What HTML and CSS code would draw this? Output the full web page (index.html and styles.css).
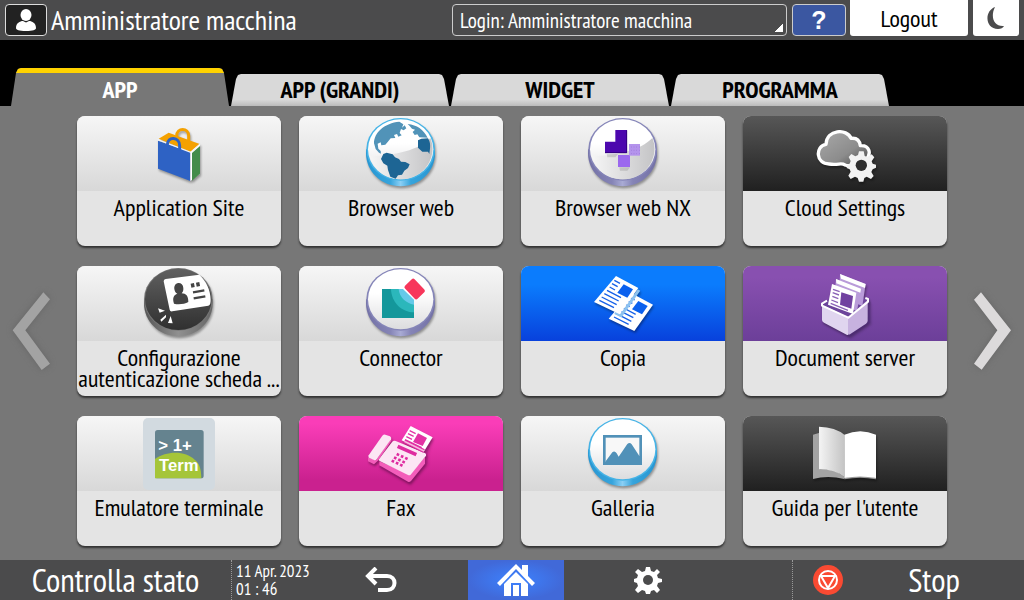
FILE: index.html
```html
<!DOCTYPE html>
<html lang="it">
<head>
  <meta charset="UTF-8">
  <meta name="viewport" content="width=device-width, initial-scale=1.0">
  <title>Amministratore macchina</title>
  <link rel="stylesheet" href="styles.css">
</head>
<body>
  <!-- Shared gradients -->
  <svg class="defs" width="0" height="0" aria-hidden="true">
    <defs>
      <linearGradient id="rim-blue"><stop offset="0" stop-color="#2796d2"/><stop offset=".35" stop-color="#36a4dc"/><stop offset=".5" stop-color="#8ccff4"/><stop offset=".65" stop-color="#36a4dc"/><stop offset="1" stop-color="#2796d2"/></linearGradient>
      <linearGradient id="rim-violet"><stop offset="0" stop-color="#7371a6"/><stop offset=".35" stop-color="#8584b6"/><stop offset=".5" stop-color="#a9abd4"/><stop offset=".65" stop-color="#8584b6"/><stop offset="1" stop-color="#7371a6"/></linearGradient>
      <linearGradient id="rim-dark"><stop offset="0" stop-color="#555"/><stop offset=".5" stop-color="#909090"/><stop offset="1" stop-color="#666"/></linearGradient>
      <linearGradient id="face" x2="0" y2="1"><stop offset=".4" stop-color="#fff"/><stop offset="1" stop-color="#dcdcde"/></linearGradient>
      <linearGradient id="face-dark" x2="0" y2="1"><stop offset="0" stop-color="#606060"/><stop offset="1" stop-color="#303030"/></linearGradient>
      <linearGradient id="shade" x1="1" x2="0"><stop offset="0" stop-color="#c4c4c6"/><stop offset="1" stop-color="#f6f6f6"/></linearGradient>
      <linearGradient id="cloud" x2="1" y2="1"><stop offset="0" stop-color="#aaa"/><stop offset=".6" stop-color="#8c8c8c"/><stop offset="1" stop-color="#444"/></linearGradient>
      <linearGradient id="page" x2="1" y2="0"><stop offset="0" stop-color="#f4f4f4"/><stop offset="1" stop-color="#c4c4c4"/></linearGradient>
    </defs>
  </svg>

  <header class="topbar">
    <button class="user-btn" aria-label="Utente">
      <svg width="20" height="22" viewBox="0 0 20 22" fill="#fff"><ellipse cx="10" cy="6" rx="5.500" ry="6"/><path d="M0 19c0-5 4-7 7-7l3 1.500 3-1.500c3 0 7 2 7 7 0 2-3 3-10 3S0 21 0 19z"/></svg>
    </button>
    <h1>Amministratore macchina</h1>
    <select class="login" aria-label="Login">
      <option>Login: Amministratore macchina</option>
    </select>
    <button class="help-btn">?</button>
    <button class="logout-btn">Logout</button>
    <button class="sleep-btn" aria-label="Risparmio energia">
      <svg width="18" height="22" viewBox="0 0 18 22"><path d="M8 0C-3 4-2 22 11 22c3 0 5-1 6-3C7 20 3 10 8 0z" fill="#4b4b4c"/></svg>
    </button>
  </header>

  <nav class="tabs">
    <button class="tab active">APP</button>
    <button class="tab">APP (GRANDI)</button>
    <button class="tab">WIDGET</button>
    <button class="tab">PROGRAMMA</button>
  </nav>

  <main class="home">
    <button class="arrow prev" aria-label="Precedente">
      <svg width="44" height="84" viewBox="30 88 132 252"><path d="M130 98l20 21-74 93 74 100-25 19L38 212z" fill="#a3a3a3"/></svg>
    </button>

    <div class="apps">
      <button class="card">
        <span class="card-icon">
          <svg viewBox="219 24 216 216">
            <path d="M266 86l30-18 93 34-26 24z" fill="#f4a100"/>
            <path d="M320 84v-6c0-26 36-26 36 0v20" fill="none" stroke="#f4a100" stroke-width="9"/>
            <path d="M264 92l97 34v87l-97-37z" fill="#2e62c4"/>
            <path d="M361 127l29-24v88l-29 22z" fill="#fff"/>
            <path d="M366 129l24-21v83l-24 21z" fill="#438c4a"/>
            <path d="M263 89l99 38 28-24" fill="none" stroke="#f4f4f4" stroke-width="4"/>
            <path d="M292 110v-6c0-27 37-23 37 3v15" fill="none" stroke="#2e62c4" stroke-width="9"/>
          </svg>
        </span>
        <span class="card-label">Application Site</span>
      </button>

      <button class="card">
        <span class="card-icon">
          <svg viewBox="225 24 216 216">
            <path d="M228 118h207v12c0 55-45 99-103 99s-104-44-104-99z" fill="url(#rim-blue)"/>
            <ellipse cx="332" cy="118" rx="103" ry="94" fill="#46b3e6"/>
            <ellipse cx="332" cy="118" rx="98" ry="90" fill="url(#face)"/>
            <path d="M239 139c82-4 145-18 182-55 24 55-20 124-89 124-46 0-80-27-93-69z" fill="url(#shade)"/>
            <path d="M252 100c0-33 32-61 76-65l12 8-4 10 8-7 5 9-8 6-8-4-4 12 6 7-10 4-4-8-9 3 4 9-14 1-9 11-7 8-12 2-2-9-9 4 2 15 7 7 1 8-6-3-10-11zM353 42c28 3 47 16 60 41l-25-1-6-9-8 2-6-9 7-7-9-3-7-8z" fill="#5193b8"/>
            <path d="M384 91l10-5 20-1c9 13 7 29 4 47l-4-7h-17l-13-12zM280 132l10-4 18 5 7 9 12 5 6 8 13 1 13 7-5 11-11 8-7 12-12 2-7 10-16-6-7-20-2-13-12-7-7-13z" fill="#1d6594"/>
          </svg>
        </span>
        <span class="card-label">Browser web</span>
      </button>

      <button class="card">
        <span class="card-icon">
          <svg viewBox="231 24 216 216">
            <path d="M234 118h207v12c0 55-45 99-103 99s-104-44-104-99z" fill="url(#rim-violet)"/>
            <ellipse cx="338" cy="118" rx="103" ry="94" fill="#8585b8"/>
            <ellipse cx="338" cy="118" rx="98" ry="90" fill="url(#face)"/>
            <path d="M245 139c82-4 145-18 182-55 24 55-20 124-89 124-46 0-80-27-93-69z" fill="url(#shade)"/>
            <path d="M290 132h34l-8 10h-24zM328 172h32l-8 10h-22z" fill="#555" opacity=".2"/>
            <path d="M316 60h35v69h-66V95h31z" fill="#4c07ae"/>
            <path d="M285 128h65V61" fill="none" stroke="#31007d" stroke-width="3"/>
            <path d="M324 135h36v36h-36z" fill="#9b68ee"/>
            <path d="M357 102h33v35h-33z" fill="#b493ec"/>
            <path d="M363 111h26M363 121h26M363 131h26" stroke="#9068cc" stroke-width="2" stroke-dasharray="2 6"/>
          </svg>
        </span>
        <span class="card-label">Browser web NX</span>
      </button>

      <button class="card dark">
        <span class="card-icon">
          <svg viewBox="222 24 216 216">
            <path d="M282 162c-40 0-42-54-9-59 2-46 63-48 75-18 17-2 26 7 28 22 28-2 34 24 17 41l-36 18c-10-2-14 4-27-1-10-8-20 1-48-3z" fill="url(#cloud)" stroke="#fff" stroke-width="10" stroke-linejoin="round"/>
            <path d="M372 124h14l3 14 8 3 13-8 8 9-8 12 3 7 10 3v9l-10 5-4 8 7 12-8 9-13-7-7 4-3 11h-13l-4-11-8-4-13 7-7-10 7-12-3-7-9-4v-9l9-4 3-8-6-12 8-9 12 7 8-4z" fill="#f2f2f2"/>
            <circle cx="379" cy="166" r="17" fill="#2d2d2d"/>
          </svg>
        </span>
        <span class="card-label">Cloud Settings</span>
      </button>

      <button class="card">
        <span class="card-icon">
          <svg viewBox="429 24 216 216">
            <path d="M432 118h206v12c0 55-45 99-103 99s-103-44-103-99z" fill="url(#rim-dark)"/>
            <ellipse cx="535" cy="118" rx="103" ry="94" fill="#777"/>
            <ellipse cx="535" cy="118" rx="100" ry="92" fill="url(#face-dark)"/>
            <path d="M491 64q0-6 6-7l101-13c20 18 34 47 34 75 0 9-1 16-7 18l-108 17q-7 1-8-5z" fill="#fff"/>
            <path d="M523 87c-3-22 26-25 27-3 1 9-3 13-5 16 13 0 20 8 20 26-11 6-29 9-43 5-6-19 0-26 10-30-5-2-8-7-9-14z" fill="#444"/>
            <path d="M579 97l34-6M581 115l35-6" stroke="#444" stroke-width="7"/>
            <path d="M573 77l10-2M589 74l10-2" stroke="#444" stroke-width="12"/>
            <path d="M474 145l21 7-16 6zM498 164l-17 15 3 6 14-13zM512 168l6 22-14-1z" fill="#fff"/>
          </svg>
        </span>
        <span class="card-label">Configurazione <span class="nowrap">autenticazione scheda ...</span></span>
      </button>

      <button class="card">
        <span class="card-icon">
          <svg viewBox="225 24 216 216">
            <path d="M228 118h207v12c0 55-45 99-103 99s-104-44-104-99z" fill="url(#rim-violet)"/>
            <ellipse cx="332" cy="118" rx="103" ry="94" fill="#8585b8"/>
            <ellipse cx="332" cy="118" rx="98" ry="90" fill="url(#face)"/>
            <path d="M276 87h51l45 39v48h-96z" fill="#14979b"/>
            <path d="M303 87h28l41 35v35c-37 0-68-30-69-70z" fill="#2bb7bb"/>
            <path d="M326 87h13l33 32v15c-24-4-44-22-46-47z" fill="#65c9e8"/>
            <rect x="-27" y="-20" width="54" height="40" rx="6" transform="translate(374 87) rotate(46)" fill="#f7375b"/>
          </svg>
        </span>
        <span class="card-label">Connector</span>
      </button>

      <button class="card blue">
        <span class="card-icon">
          <svg viewBox="891 24 216 216">
            <g transform="translate(44 50)">
              <path d="M978 48l67 36-56 79-77-37z" fill="#fff"/>
              <path d="M1001 73l28 15-17 25-30-15z" fill="#0b61ee"/>
              <path d="M973 61l17 9M966 71l17 9M959 81l16 9M951 91l42 22M943 101l43 22M935 111l45 23M928 121l44 22" stroke="#1560e8" stroke-width="4"/>
            </g>
            <path d="M1047 90l-54 77-18-9" fill="none" stroke="#8cc2ef" stroke-width="9"/>
            <path d="M978 48l67 36-56 79-77-37z" fill="#fff"/>
            <path d="M1001 73l28 15-17 25-30-15z" fill="#0b61ee"/>
            <path d="M973 61l17 9M966 71l17 9M959 81l16 9M951 91l42 22M943 101l43 22M935 111l45 23M928 121l44 22" stroke="#1560e8" stroke-width="4"/>
          </svg>
        </span>
        <span class="card-label">Copia</span>
      </button>

      <button class="card purple">
        <span class="card-icon">
          <svg viewBox="222 24 216 216">
            <path d="M272 184l72 46 62-42v-62l-14-14-50 60z" fill="#4d2b79" opacity=".5"/>
            <path d="M260 134l24-17 90-10 24 13-56 52z" fill="#6c459b"/>
            <path d="M315 42l77 30-10 66-70-30z" fill="#b99bd9"/>
            <path d="M315 42l77 30-2 12-72-28z" fill="#fff"/>
            <path d="M303 57l75 29-12 68-70-30z" fill="#b99bd9"/>
            <path d="M303 57l75 29-2 12-72-28z" fill="#fff"/>
            <path d="M291 72l73 26-10 64-75-28z" fill="#fff"/>
            <path d="M319 97l35 11-5 38-34-12z" fill="#7142a0"/>
            <path d="M294 88l20 7M293 98l19 7M292 109l18 7M289 120l20 8M287 130l52 21" stroke="#8b63b7" stroke-width="4"/>
            <path d="M261 134l79 38v50q0 4-5 2l-68-36q-6-3-6-8z" fill="#e0d5ef"/>
            <path d="M339 172l59-52v62q0 5-5 9l-48 32q-6 3-6-3z" fill="#c7b2df"/>
            <path d="M276 122l-15 9v6l79 36 59-48v-8l-8-3" fill="none" stroke="#fff" stroke-width="6" stroke-linejoin="round"/>
          </svg>
        </span>
        <span class="card-label">Document server</span>
      </button>

      <button class="card">
        <span class="card-icon flat">
          <svg viewBox="219 24 216 216">
            <rect x="219" y="24" width="216" height="216" rx="15" fill="#d2dae0"/>
            <rect x="255" y="60" width="146" height="145" rx="8" fill="#65838f"/>
            <path d="M255 147c35-26 92-25 119 2 13 10 20 26 20 56H255z" fill="#a5c539"/>
            <g class="term-text"><text x="265" y="123">&gt; 1+</text><text x="267" y="184">Term</text></g>
          </svg>
        </span>
        <span class="card-label">Emulatore terminale</span>
      </button>

      <button class="card pink">
        <span class="card-icon">
          <svg viewBox="885 24 216 216">
            <path d="M925 171l94 51 54-62v-35l14-37-60 10z" fill="#8c1572" opacity=".3"/>
            <path d="M1022 48l66 34-27 44-66-35z" fill="#fff"/>
            <path d="M1044 70l27 14-13 24-29-12z" fill="#e332a4"/>
            <path d="M1019 62l18 9M1014 71l17 8M1009 80l17 8M1005 89l50 24" stroke="#e332a4" stroke-width="4"/>
            <path d="M928 154v12l86 49q4 2 9-2l42-52v-20l-45 52z" fill="#f35dba"/>
            <path d="M967 95q4-4 10-2l22 9 67 28q3 2 2 7l-46 57q-3 3-8 1l-85-42q-4-2-2-6z" fill="#fce6f4"/>
            <path d="M983 109l56 25M1003 94l59 29" stroke="#df2ba0" stroke-width="11"/>
            <path d="M1003 94l59 29" stroke="#f7b8de" stroke-width="5"/>
            <path d="M980 132l35 16M972 142l35 17M965 152l38 18" stroke="#df2ba0" stroke-width="8" stroke-dasharray="8 6"/>
            <path d="M894 142v12l18 9 13-12 39-58V83l-46 68z" fill="#f35dba"/>
            <path d="M937 77q4-4 9-3l14 5q5 3 3 9l-43 60q-3 4-8 2l-15-7q-3-3-1-7z" fill="#fce6f4"/>
          </svg>
        </span>
        <span class="card-label">Fax</span>
      </button>

      <button class="card">
        <span class="card-icon">
          <svg viewBox="231 24 216 216">
            <path d="M234 118h207v12c0 55-45 99-103 99s-104-44-104-99z" fill="url(#rim-blue)"/>
            <ellipse cx="338" cy="118" rx="103" ry="94" fill="#46b3e6"/>
            <ellipse cx="338" cy="118" rx="98" ry="90" fill="url(#face)"/>
            <rect x="283" y="79" width="109" height="82" fill="#f8f8f8" stroke="#5191b8" stroke-width="8"/>
            <path d="M283 161l5-9 19-25q7-6 13 3l6 10 26-38q7-7 13 1l23 35 4-1v24z" fill="#5191b8"/>
          </svg>
        </span>
        <span class="card-label">Galleria</span>
      </button>

      <button class="card dark">
        <span class="card-icon">
          <svg viewBox="897 24 216 216">
            <path d="M909 74l20-6v110q48-4 74 24v5q-50-12-94 0z" fill="#a3a3a3"/>
            <path d="M1003 203q48-11 95 0v5q-48-10-95 0z" fill="#999"/>
            <path d="M927 50q50 2 76 24v128q-26-24-76-24z" fill="url(#page)"/>
            <path d="M1003 74q48-21 95 0v130q-48-9-95 0z" fill="#fff"/>
          </svg>
        </span>
        <span class="card-label">Guida per l'utente</span>
      </button>
    </div>

    <button class="arrow next" aria-label="Successivo">
      <svg width="44" height="84" viewBox="708 88 132 252"><path d="M738 98l90 114-88 118-23-18 70-100-70-92z" fill="#dcdadb"/></svg>
    </button>
  </main>

  <footer class="bottombar">
    <button class="status-btn">Controlla stato</button>
    <div class="clock-area">
      <p class="clock">11 Apr. 2023<br>01 : 46</p>
      <button class="back-btn" aria-label="Indietro">
        <svg width="34" height="26" viewBox="0 0 34 26" fill="none" stroke="#fff" stroke-width="4"><path d="M4 9h19c10 0 10 14 0 14h-9"/><path d="M12 1L4 9l8 8"/></svg>
      </button>
    </div>
    <button class="home-btn" aria-label="Home">
      <svg width="38" height="34" viewBox="0 0 38 34" fill="#fff"><path d="M19 1l6 6V2h6v11l7 7-3 3L19 6 3 23l-3-3z"/><path fill-rule="evenodd" d="M19 9l12 12v12H7V21zM14 20v13h2V22h6v11h2V20z"/></svg>
    </button>
    <button class="settings-btn" aria-label="Impostazioni">
      <svg width="28" height="28" viewBox="0 0 28 28"><path d="M12 1h4l1 4 3 1 3-3 3 3-3 3 1 3 4 1v3l-4 1-1 3 3 4-3 3-3-3-3 1-1 3h-4l-1-3-3-1-4 3-3-3 3-4-1-3-3-1v-3l3-1 1-3-3-3 3-3 4 3 3-1z" fill="#fff"/><circle cx="14" cy="14" r="5" fill="#4b4b4c"/></svg>
    </button>
    <button class="stop-btn">
      <svg width="32" height="32" viewBox="0 0 32 32"><circle cx="16" cy="16" r="15" fill="#fa4a32"/><g fill="none" stroke="#fff" stroke-width="2"><circle cx="16" cy="16" r="9"/><path d="M9 12h14l-7 12z"/></g></svg>
      <span>Stop</span>
    </button>
  </footer>
</body>
</html>
```
FILE: styles.css
```css
/* General Reset */
* {
  margin: 0;
  padding: 0;
  box-sizing: border-box;
}

body {
  font-family: "PT Sans Narrow", "Ubuntu Condensed", "Roboto Condensed", "Open Sans", sans-serif;
  background-color: #777;
  color: #000;
  min-height: 100vh;
  display: flex;
  flex-direction: column;
}

button, select {
  font: inherit;
  color: inherit;
  border: none;
  background: none;
  cursor: pointer;
}

svg {
  display: block;
  flex-shrink: 0;
}

.defs {
  position: absolute;
}

.nowrap {
  white-space: nowrap;
}

/* Top bar */
.topbar {
  display: flex;
  align-items: flex-start;
  height: 40px;
  padding: 0 5px;
  background-color: #4b4b4c;
}

.topbar button {
  display: flex;
  justify-content: center;
  align-items: center;
}

.user-btn {
  width: 42px;
  height: 32px;
  margin-top: 4px;
  background-color: #222;
  border: 1px solid #ddd;
  border-radius: 4px;
}

h1 {
  flex: 1;
  padding-left: 4px;
  font-size: 28px;
  font-weight: normal;
  line-height: 40px;
  color: #fff;
  white-space: nowrap;
}

.login {
  appearance: none;
  width: 335px;
  height: 32px;
  margin-top: 4px;
  padding: 0 7px;
  font-size: 21px;
  color: #fff;
  border: 1px solid #ccc;
  border-radius: 4px;
  background: linear-gradient(135deg, transparent 50%, #fff 50%) right 3px bottom 3px / 8px 8px no-repeat;
}

.login option {
  color: #000;
}

.help-btn {
  width: 54px;
  height: 32px;
  margin: 4px 4px 0 5px;
  font-family: "Liberation Sans", Arial, sans-serif;
  font-size: 25px;
  font-weight: bold;
  background-color: #3b57a1;
  border: 1px solid #ccc;
  border-radius: 4px;
}

.topbar .help-btn {
  color: #fff;
}

.logout-btn {
  width: 118px;
  height: 36px;
  margin-right: 5px;
  font-size: 24px;
  background-color: #fff;
  border-radius: 0 0 3px 3px;
}

.sleep-btn {
  width: 46px;
  height: 36px;
  background-color: #fff;
  border-radius: 0 0 3px 3px;
}

/* Tabs */
.tabs {
  display: flex;
  align-items: flex-end;
  gap: 2px;
  height: 66px;
  padding-left: 11px;
  background-color: #000;
}

.tab {
  flex: 0 1 218px;
  height: 32px;
  font-size: 24px;
  font-weight: bold;
  line-height: 32px;
  background: linear-gradient(#d9d9d9 80%, #bbb);
  clip-path: polygon(0 100%, 5px 5px, 7px 1px, 10px 0, calc(100% - 10px) 0, calc(100% - 7px) 1px, calc(100% - 5px) 5px, 100% 100%);
}

.tab.active {
  height: 38px;
  color: #fff;
  background: #777;
  border-top: 5px solid #ffd200;
}

/* App grid */
.home {
  flex: 1;
  display: flex;
  align-items: stretch;
  padding: 10px 0 14px;
}

.arrow {
  width: 77px;
  display: flex;
  align-items: center;
}

.arrow svg {
  filter: drop-shadow(0 0 3px #666);
}

.prev {
  padding-left: 10px;
}

.next {
  justify-content: flex-end;
  padding-right: 9px;
}

.apps {
  flex: 1;
  display: grid;
  grid-template-columns: repeat(4, 1fr);
  grid-template-rows: repeat(3, 1fr);
  gap: 20px 18px;
}

.card {
  display: flex;
  flex-direction: column;
  min-height: 130px;
  border-radius: 8px;
  background-color: #e4e4e4;
  box-shadow: 0 2px 2px #333;
  overflow: hidden;
}

.card-icon {
  width: 100%;
  height: 75px;
  padding-top: 2px;
  display: flex;
  justify-content: center;
  background: linear-gradient(#f6f6f6, #d8d8d8);
}

.card-icon svg {
  width: 72px;
  height: 72px;
  filter: drop-shadow(1px 2px 1px rgba(0, 0, 0, 0.35));
}

.card-icon.flat svg {
  filter: none;
}

.card-label {
  width: 100%;
  padding-top: 6px;
  font-size: 24px;
  line-height: 21px;
  text-align: center;
}

.dark .card-icon {
  background: linear-gradient(#575757, #202020);
}

.blue .card-icon {
  background: linear-gradient(#0b7cfd 25%, #0841dc);
}

.purple .card-icon {
  background: linear-gradient(#8850b0 15%, #6c3f99);
}

.pink .card-icon {
  background: linear-gradient(#fa3db8 10%, #ca218f 85%);
}

.term-text {
  font-family: "Liberation Sans", Arial, sans-serif;
  font-size: 50px;
  font-weight: bold;
  fill: #fff;
}

/* Bottom bar */
.bottombar {
  display: grid;
  grid-template-columns: 232fr 236fr 96fr 228fr 232fr;
  grid-template-rows: 40px;
  background-color: #4b4b4c;
  color: #fff;
}

.bottombar button {
  display: flex;
  justify-content: center;
  align-items: center;
}

.bottombar .status-btn {
  border-right: 1px dotted #999;
  font-size: 33px;
  line-height: 38px;
  white-space: nowrap;
}

.clock-area {
  display: flex;
}

.clock {
  padding: 2px 0 0 4px;
  font-size: 17px;
  line-height: 18px;
  white-space: nowrap;
}

.back-btn {
  flex: 1;
  padding-right: 16px;
}

.home-btn {
  background: radial-gradient(#3c82ff, #4169d8 70%);
}

.settings-btn {
  padding-right: 60px;
}

.bottombar .stop-btn {
  justify-content: flex-start;
  padding-left: 19px;
  border-left: 1px dotted #999;
  font-size: 33px;
  line-height: 38px;
}

.stop-btn span {
  flex: 1;
  text-align: center;
}
```
